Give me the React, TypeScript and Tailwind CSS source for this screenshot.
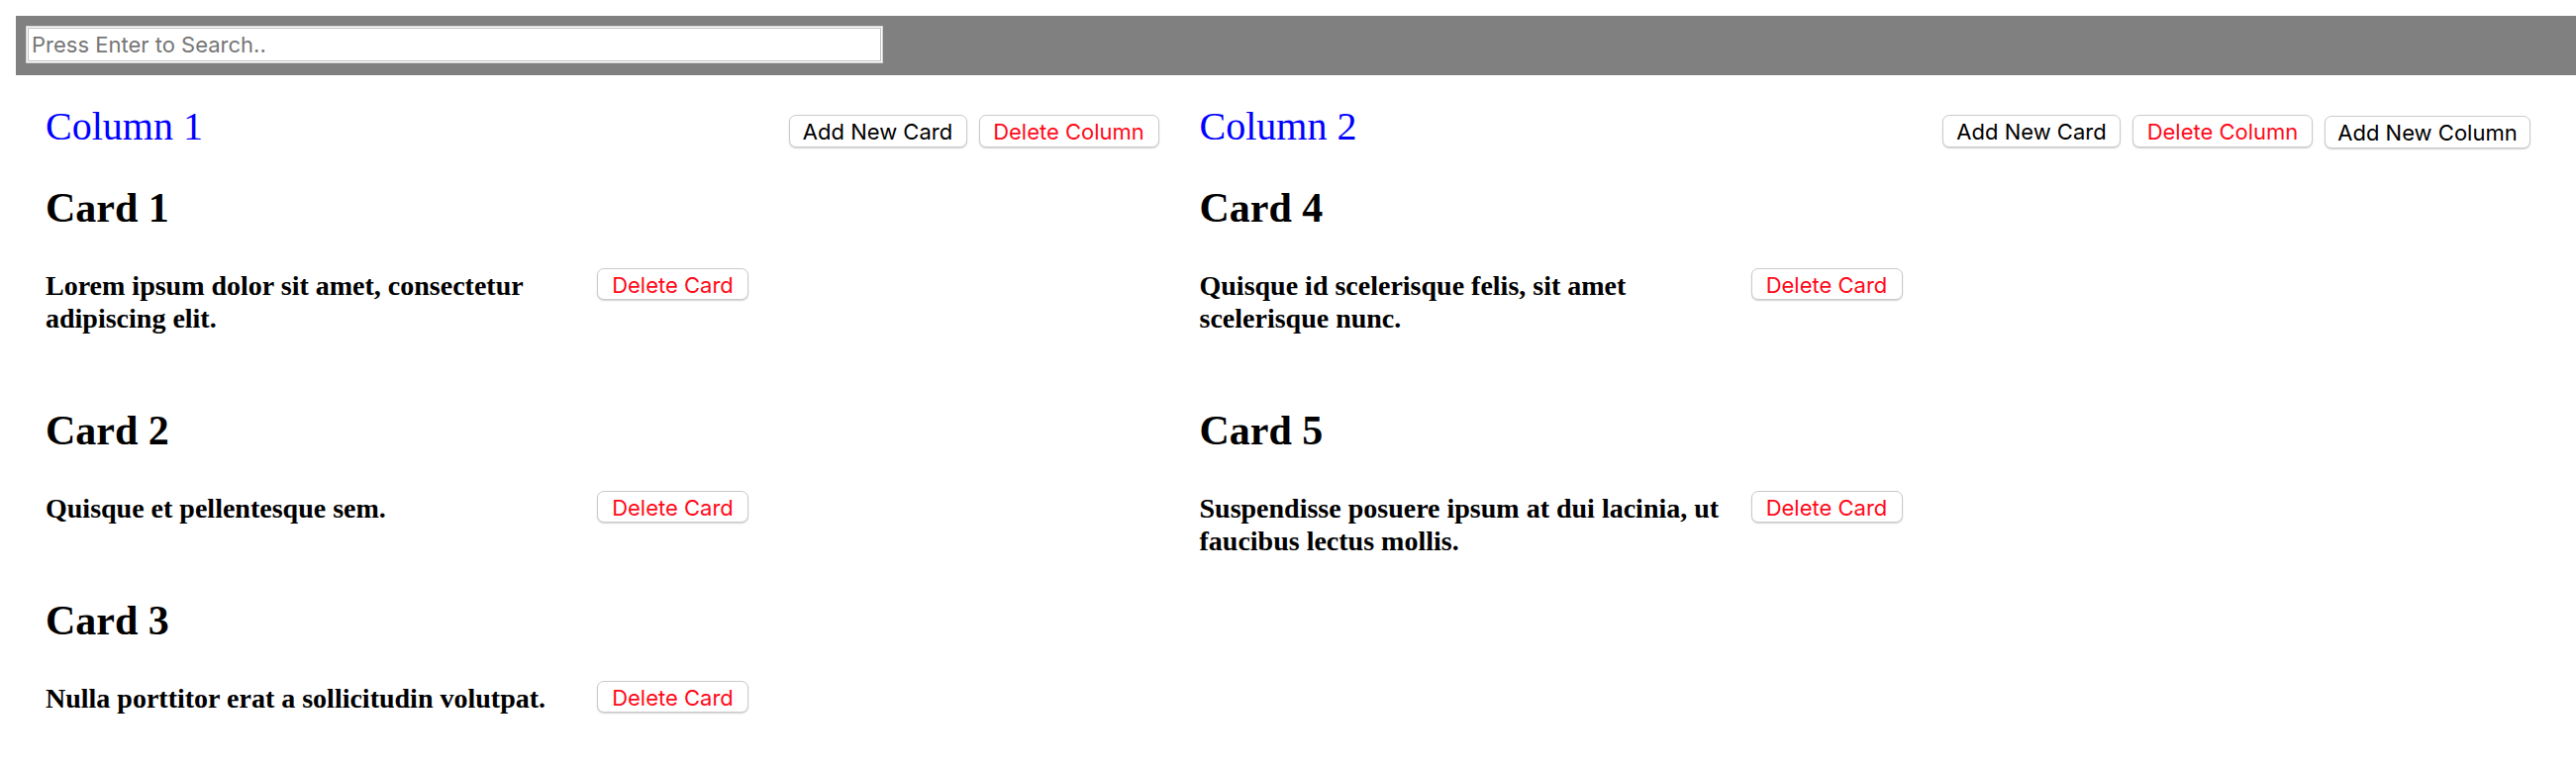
import React from "react";

const serif = { fontFamily: '"Liberation Serif", "Times New Roman", serif' };

function Btn({ children, red, w }: { children: React.ReactNode; red?: boolean; w: string }) {
  return (
    <button
      className={
        "h-[33px] shrink-0 rounded-[7px] border border-[#cbcbcb] bg-white shadow-[0_1px_1.5px_rgba(0,0,0,0.18)] text-[22px] leading-[26px] pt-[1px] flex items-center justify-center " +
        w +
        (red ? " text-[#ff0a1a]" : " text-black")
      }
      style={{ fontFamily: 'Inter, "Liberation Sans", Arial, sans-serif' }}
    >
      {children}
    </button>
  );
}

function DelBtn() {
  return (
    <button
      className="h-[32px] w-[153px] shrink-0 -mt-[1px] ml-[17px] rounded-[7px] border border-[#cbcbcb] bg-white shadow-[0_1px_1.5px_rgba(0,0,0,0.18)] text-[22px] leading-[26px] pt-[1px] text-[#ff0a1a] flex items-center justify-center"
      style={{ fontFamily: 'Inter, "Liberation Sans", Arial, sans-serif' }}
    >
      Delete Card
    </button>
  );
}

type Card = { title: string; text: string };

function CardView({ c }: { c: Card }) {
  return (
    <div className="flex flex-col">
      <div className="h-[48px] text-[42px] leading-[48px] font-bold text-black" style={serif}>
        {c.title}
      </div>
      <div className="mt-[38px] flex items-start">
        <div className="w-[540px] shrink-0 text-[28px] leading-[33px] font-bold text-black" style={serif}>
          {c.text}
        </div>
        <DelBtn />
      </div>
    </div>
  );
}

function Column({ title, cards }: { title: string; cards: Card[] }) {
  return (
    <div className="flex-1 min-w-0 flex flex-col">
      <div className="flex items-baseline justify-between">
        <div className="text-[40px] leading-[46px] text-[#0000ff]" style={serif}>
          {title}
        </div>
        <div className="flex items-baseline gap-[12px]">
          <Btn w="w-[180px]">Add New Card</Btn>
          <Btn w="w-[182px]" red>
            Delete Column
          </Btn>
        </div>
      </div>
      <div className="mt-[35px] flex flex-col gap-[73px]">
        {cards.map((c) => (
          <CardView key={c.title} c={c} />
        ))}
      </div>
    </div>
  );
}

export default function App() {
  const col1: Card[] = [
    { title: "Card 1", text: "Lorem ipsum dolor sit amet, consectetur adipiscing elit." },
    { title: "Card 2", text: "Quisque et pellentesque sem." },
    { title: "Card 3", text: "Nulla porttitor erat a sollicitudin volutpat." },
  ];
  const col2: Card[] = [
    { title: "Card 4", text: "Quisque id scelerisque felis, sit amet scelerisque nunc." },
    { title: "Card 5", text: "Suspendisse posuere ipsum at dui lacinia, ut faucibus lectus mollis." },
  ];
  return (
    <div className="min-h-[776px] bg-white pt-[16px] pl-[16px] overflow-hidden">
      <div className="h-[60px] bg-[#808080] pt-[10px] pl-[10px]">
        <input
          className="h-[38px] w-[866px] bg-white border border-[#d0d0d0] shadow-[inset_0_0_0_1px_#fff,inset_0_0_0_2px_#c2c2c2] pl-[5px] text-[22px] outline-none placeholder:text-[#767676]"
          style={{ fontFamily: 'Inter, "Liberation Sans", Arial, sans-serif' }}
          placeholder="Press Enter to Search.."
        />
      </div>
      <div className="mr-[16px] px-[30px] pt-[29px] flex items-start">
        <Column title="Column 1" cards={col1} />
        <div className="w-[41px] shrink-0" />
        <Column title="Column 2" cards={col2} />
        <div className="ml-[12px] mt-[12px]">
          <Btn w="w-[208px]">Add New Column</Btn>
        </div>
      </div>
    </div>
  );
}
